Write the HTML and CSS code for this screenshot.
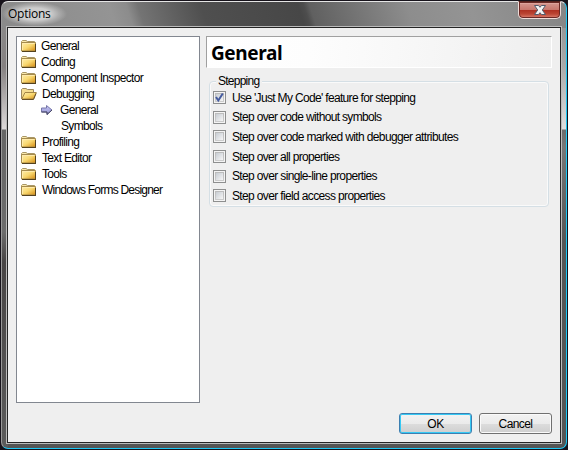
FILE: index.html
```html
<!DOCTYPE html>
<html lang="en">
<head>
<meta charset="utf-8">
<title>Options</title>
<link rel="stylesheet" href="styles.css">
</head>
<body>
<svg class="defs" width="0" height="0" aria-hidden="true">
  <defs>
    <linearGradient id="gold" x1="0" y1="0" x2="1" y2="1">
      <stop offset="0" stop-color="#fff0b0"/><stop offset=".5" stop-color="#f8d76f"/><stop offset="1" stop-color="#d48a12"/>
    </linearGradient>
    <symbol id="folder" viewBox="0 0 16 14">
      <path d="M.5 12V2.500L1.500 1.500H5L6.500 2.500H13.500V4" fill="#fae9ad" stroke="#a99766"/>
      <path d="M.5 3.500H14.500V12H.5Z" fill="url(#gold)" stroke="#a58b4d"/>
      <path d="M1.500 11V4.500H13.500" fill="none" stroke="#ffebac"/>
      <path d="M1 12.500H15M14.500 5V13" fill="none" stroke="#54421f"/>
    </symbol>
    <symbol id="open" viewBox="0 0 16 14">
      <path d="M.5 12V2.500L1.500 1.500H5L6.500 2.500H12.500V6" fill="#f4dc91" stroke="#9d8960"/>
      <path d="M4 5.500H15.300L12.500 12H.8Z" fill="url(#gold)" stroke="#a38545"/>
      <path d="M1 12.500H12.500L15 6.500" fill="none" stroke="#685027"/>
    </symbol>
    <linearGradient id="blue" x1="0" y1="0" x2="0" y2="1">
      <stop offset="0" stop-color="#c8c8f5"/><stop offset="1" stop-color="#9292d2"/>
    </linearGradient>
  </defs>
</svg>
<div class="window">
  <header class="titlebar">
    <span class="title">Options</span>
    <button class="close" aria-label="Close">
      <svg width="14" height="12" viewBox="0 0 14 12"><path d="M1.500 1.500H5.500L7 3.300 8.500 1.500H12.500L9.300 6 12.500 10.500H8.500L7 8.700 5.500 10.500H1.500L4.700 6Z" fill="#f4f4f4" stroke="#515a6b"/></svg>
    </button>
  </header>
  <main class="client">
    <div class="content">
      <ul class="tree">
        <li><svg><use href="#folder"/></svg><span>General</span></li>
        <li><svg><use href="#folder"/></svg><span>Coding</span></li>
        <li><svg><use href="#folder"/></svg><span>Component Inspector</span></li>
        <li><svg><use href="#open"/></svg><span class="indent">Debugging</span></li>
        <li class="child"><svg class="arrow" viewBox="0 0 12 10"><path d="M.5 3H5.500V.5L11 5 6 9.500V7H.5Z" fill="url(#blue)" stroke="#7777aa"/><path d="M.5 7H6V9.500L11 5" fill="none" stroke="#474763"/></svg><span>General</span></li>
        <li class="child"><i></i><span class="indent">Symbols</span></li>
        <li><svg><use href="#folder"/></svg><span class="indent">Profiling</span></li>
        <li><svg><use href="#folder"/></svg><span class="indent">Text Editor</span></li>
        <li><svg><use href="#folder"/></svg><span class="indent">Tools</span></li>
        <li><svg><use href="#folder"/></svg><span class="indent designer">Windows Forms Designer</span></li>
      </ul>
      <section class="panel">
        <h1>General</h1>
        <fieldset>
          <legend>Stepping</legend>
          <label><span class="check"><svg width="11" height="11" viewBox="0 0 11 11"><path d="M2 5L4.300 8.500 8.800 1.500" fill="none" stroke="#455b9f" stroke-width="2"/></svg></span><span>Use 'Just My Code' feature for stepping</span></label>
          <label><span class="check"></span><span>Step over code without symbols</span></label>
          <label><span class="check"></span><span class="loose">Step over code marked with debugger attributes</span></label>
          <label><span class="check"></span><span>Step over all properties</span></label>
          <label><span class="check"></span><span class="loose">Step over single-line properties</span></label>
          <label><span class="check"></span><span class="loose">Step over field access properties</span></label>
        </fieldset>
      </section>
    </div>
    <footer><button class="btn ok">OK</button><button class="btn">Cancel</button></footer>
  </main>
</div>
</body>
</html>
```

FILE: styles.css
```css
* { box-sizing: border-box; }
body {
  margin: 0;
  width: 568px;
  height: 450px;
  overflow: hidden;
  background: #17131b;
  color: #000;
  font: 12px/16px "Liberation Sans", Arial, sans-serif;
  letter-spacing: -.67px;
}
.defs { position: absolute; }
.window {
  width: 566px;
  height: 448px;
  margin: 1px;
  padding: 0 4px 5px;
  border: 1px solid #e5e5e5;
  border-right-color: #1cc8f5;
  border-bottom-color: #1cc8f5;
  border-left-color: #999;
  border-radius: 7px;
  background:
    linear-gradient(72deg, #8a8a8a 0, #949494 20%, #8c8c8c 23%, #747474 25%, #4f4f4f 36%, #474747 53%, #4d4d4d 54%, #606060 55%, #8d8d8d 72%, #949494 83%, #858585 100%) top / 100% 26px no-repeat,
    linear-gradient(#8b8b8b, #aaa 65px, #dedede 127px, #6c6c6c 128px, #777 145px, #555 240px, #555) right / 6px 100% no-repeat,
    linear-gradient(#8d8d8d, #858181 65px, #ddd9d9 127px, #666 128px, #6c6c6c 230px, #484545 260px, #5c5c5c) left / 6px 100% no-repeat,
    #555;
}
.titlebar {
  height: 24px;
  display: flex;
  justify-content: space-between;
}
.title {
  height: 24px;
  margin: 0 0 0 -4px;
  padding: 2px 16px 0 6px;
  font: 12px/20px "Open Sans", sans-serif;
  letter-spacing: -.25px;
  background: radial-gradient(closest-side, #cdcdcd 50%, #b8b8b8b0 75%, #9990);
}
.close {
  width: 43px;
  height: 18px;
  margin: -1px 1px 0 0;
  padding: 0;
  display: flex;
  align-items: center;
  justify-content: center;
  border: 1px solid #eedbd8;
  border-top-color: #54221d;
  border-radius: 0 0 5px 5px;
  box-shadow: inset 0 0 0 1px #6b2925, inset 0 2px #dda39b;
  background: linear-gradient(#d69b94, #c8776d 48%, #ae3021 50%, #bb4634 75%, #df8373);
}
.client {
  width: 554px;
  height: 416px;
  margin: 1px 0 0 1px;
  padding: 8px;
  border: 1px solid #252525;
  outline: 1px solid #bbb;
  background: #efefef;
}
.content {
  display: grid;
  grid-template-columns: 184px 346px;
  column-gap: 6px;
  height: 367px;
}
.tree {
  margin: 0;
  padding: 1px 4px;
  list-style: none;
  border: 1px solid #828790;
  background: #fff;
}
.tree li { display: flex; height: 16px; white-space: nowrap; }
.tree svg { width: 16px; height: 14px; margin: 1px 4px 0 0; flex: none; }
.tree .indent { margin-left: 1px; }
.tree .designer { letter-spacing: -.78px; }
.tree .child { padding-left: 20px; }
.tree .arrow { width: 12px; height: 10px; margin: 3px 7px 0 0; }
.tree i { width: 19px; }
.panel h1 {
  height: 32px;
  margin: 0;
  padding-left: 4px;
  border: 1px solid #a0a0a0;
  border-right-color: #fff;
  border-bottom-color: #fff;
  background: linear-gradient(95deg, #fff, #fdfdfd 30%, #efefef);
  font: bold 19px/33px "Noto Sans", sans-serif;
  letter-spacing: -.4px;
}
fieldset {
  width: 340px;
  height: 133px;
  min-width: 0;
  margin: 6px 0 0 3px;
  padding: 0 0 0 3px;
  border: 1px solid #d5dfe5;
  border-radius: 4px;
  box-shadow: inset 0 0 0 1px #fafafa;
}
legend { margin-left: 3px; padding: 0 3px 0 2px; line-height: 14px; height: 14px; letter-spacing: -.75px; background: #efefef; }
fieldset label { display: flex; align-items: center; height: 19.6px; white-space: nowrap; }
.loose { letter-spacing: -.64px; }
.check {
  width: 13px;
  height: 13px;
  margin-right: 6px;
  flex: none;
  border: 1px solid #8e8f8f;
  background: linear-gradient(135deg, #c8cdd3, #f6f6f6) center / 7px 7px no-repeat, linear-gradient(#bbb, #ccc) center / 9px 9px no-repeat, #f4f4f4;
}
.check svg { display: block; }
footer { display: flex; justify-content: flex-end; gap: 7px; padding-top: 10px; }
.btn {
  width: 73px;
  height: 21px;
  padding: 0;
  border: 1px solid #707070;
  border-radius: 3px;
  box-shadow: inset 0 0 0 1px #fafafa;
  background: linear-gradient(#f2f2f2, #ebebeb 50%, #ddd 51%, #cfcfcf);
  color: #000;
  font: 12px/18px "Liberation Sans", Arial, sans-serif;
  letter-spacing: -.6px;
}
.ok { border-color: #3c7fb1; box-shadow: inset 0 0 0 1px #36c9f4; letter-spacing: -.3px; }
```
